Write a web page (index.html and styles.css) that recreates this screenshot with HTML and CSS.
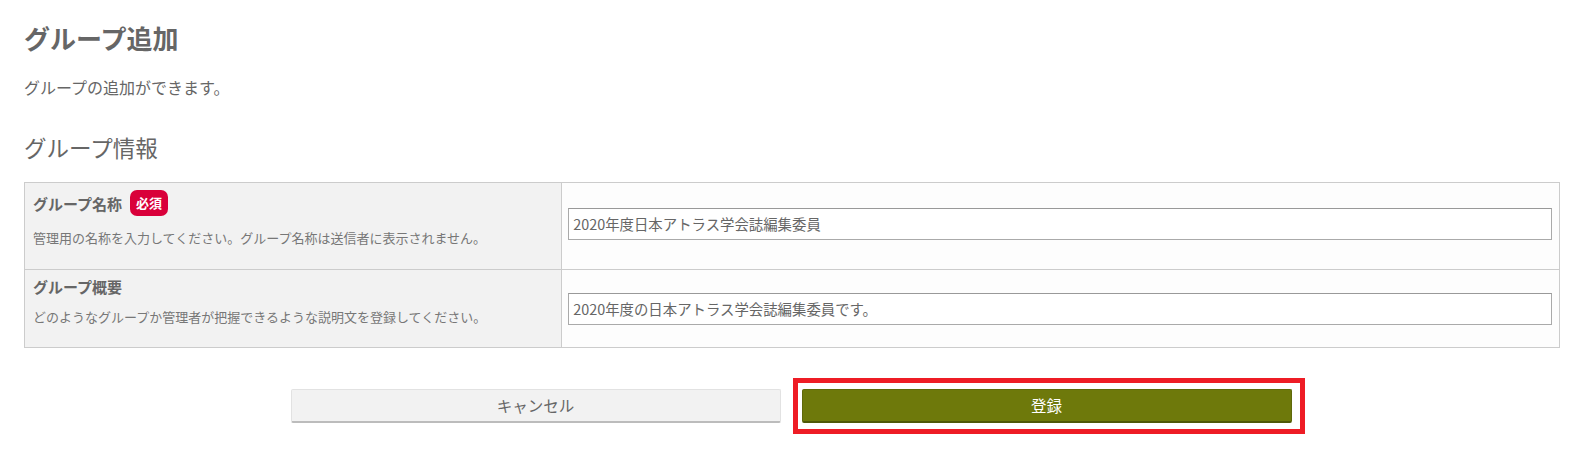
FILE: index.html
```html
<!DOCTYPE html>
<html lang="ja">
<head>
<meta charset="utf-8">
<link rel="stylesheet" href="styles.css">
</head>
<body>
<div class="page">
  <h1 class="title">グループ追加</h1>
  <p class="lead">グループの追加ができます。</p>
  <h2 class="section">グループ情報</h2>
  <table class="form">
    <tr class="row1">
      <th>
        <div class="label">グループ名称<span class="badge">必須</span></div>
        <div class="desc">管理用の名称を入力してください。グループ名称は送信者に表示されません。</div>
      </th>
      <td><div class="input">2020年度日本アトラス学会誌編集委員</div></td>
    </tr>
    <tr class="row2">
      <th>
        <div class="label">グループ概要</div>
        <div class="desc">どのようなグループか管理者が把握できるような説明文を登録してください。</div>
      </th>
      <td><div class="input">2020年度の日本アトラス学会誌編集委員です。</div></td>
    </tr>
  </table>
  <div class="actions">
    <div class="btn cancel">キャンセル</div>
    <div class="highlight"><div class="btn submit">登録</div></div>
  </div>
</div>
</body>
</html>
```

FILE: styles.css
```css
html, body {
  margin: 0;
  padding: 0;
  background: #fff;
}
body {
  font-family: "Noto Sans CJK JP", "Noto Sans", sans-serif;
  color: #666;
}
.page {
  padding: 0 19px 20px 24px;
}
.title {
  margin: 0;
  padding-top: 20px;
  font-size: 26px;
  line-height: 36px;
  font-weight: bold;
  color: #666;
}
.lead {
  margin: 0;
  padding-top: 21px;
  font-size: 16px;
  line-height: 20px;
  color: #666;
}
.section {
  margin: 0;
  padding-top: 36px;
  font-size: 22.5px;
  line-height: 28px;
  font-weight: normal;
  color: #666;
}
.form {
  margin-top: 21px;
  width: 100%;
  border-collapse: collapse;
  border: 1px solid #ccc;
}
.form th, .form td {
  border: 1px solid #ccc;
  text-align: left;
  font-weight: normal;
  vertical-align: middle;
}
.form th {
  width: 35%;
  background: #f2f2f2;
  padding: 0 8px;
  vertical-align: top;
}
.form td {
  padding: 0 7px 0 6px;
  background: #fdfdfd;
}
.row1 { height: 87px; }
.row2 { height: 78px; }
.label {
  display: flex;
  align-items: center;
  font-size: 15px;
  font-weight: bold;
  color: #666;
  height: 26px;
}
.row1 .label { margin-top: 7px; }
.row2 .label { margin-top: 3px; }
.badge {
  display: inline-block;
  margin-left: 8px;
  background: #d9003a;
  color: #fff;
  font-size: 13px;
  font-weight: bold;
  line-height: 26px;
  padding: 0 6px;
  border-radius: 7px;
}
.desc {
  font-size: 13px;
  line-height: 18px;
  color: #777;
  margin-top: 13px;
}
.row2 .desc { margin-top: 9px; }
.input {
  height: 30px;
  line-height: 30px;
  border: 1px solid #aaa;
  border-top-color: #999;
  background: #fff;
  padding: 0 4px;
  font-size: 14.4px;
  color: #666;
}
.row1 .input { margin-top: -4px; }
.row2 .input { margin-top: 0; }
.actions {
  display: flex;
  justify-content: center;
  align-items: center;
  gap: 12px;
  margin-top: 30px;
  padding-left: 11px;
}
.btn {
  text-align: center;
  font-size: 15.5px;
  border-radius: 2px;
  box-sizing: border-box;
}
.cancel {
  background: #f2f2f2;
  border: 1px solid #e2e2e2;
  border-bottom: 2px solid #bcbcbc;
  color: #666;
  line-height: 30px;
  width: 490px;
  height: 34px;
}
.highlight {
  border: 5px solid #ee1c25;
  padding: 6px 8px 6px 4px;
}
.submit {
  background: #6e790b;
  border: 1px solid #5f690a;
  border-bottom: 2px solid #4f5808;
  color: #fff;
  line-height: 30px;
  width: 490px;
  height: 34px;
}
```
